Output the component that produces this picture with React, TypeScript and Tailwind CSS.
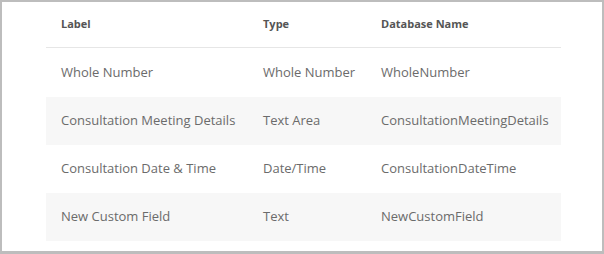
const ROWS = [
  { label: 'Whole Number', type: 'Whole Number', db: 'WholeNumber' },
  { label: 'Consultation Meeting Details', type: 'Text Area', db: 'ConsultationMeetingDetails' },
  { label: 'Consultation Date & Time', type: 'Date/Time', db: 'ConsultationDateTime' },
  { label: 'New Custom Field', type: 'Text', db: 'NewCustomField' },
]

export default function App() {
  return (
    <div
      className="w-[604px] h-[254px] bg-white border-t-2 border-l-2 border-r-2 border-b-[3px] border-[#bdbdbd] overflow-hidden"
      style={{ fontFamily: '"Open Sans", "Liberation Sans", sans-serif' }}
    >
      <div className="ml-[44px] w-[515px]">
        {/* Header */}
        <div className="flex h-[46px] items-center border-b border-[#e6e6e6] text-[11px] font-bold text-[#555]">
          <div className="w-[202px] pl-[15px]">Label</div>
          <div className="w-[118px] pl-[15px]">Type</div>
          <div className="flex-1 pl-[15px]">Database Name</div>
        </div>

        {/* Rows */}
        {ROWS.map((r, i) => (
          <div
            key={r.db}
            className={
              'flex items-center text-[13px] text-[#6b6b6b] ' +
              (i === 0 ? 'h-[49px] ' : 'h-[48px] ') +
              (i % 2 === 1 ? 'bg-[#f7f7f7]' : 'bg-white')
            }
          >
            <div className="w-[202px] pl-[15px] whitespace-nowrap">{r.label}</div>
            <div className="w-[118px] pl-[15px] whitespace-nowrap">{r.type}</div>
            <div className="flex-1 pl-[15px] whitespace-nowrap">{r.db}</div>
          </div>
        ))}
      </div>
    </div>
  )
}
